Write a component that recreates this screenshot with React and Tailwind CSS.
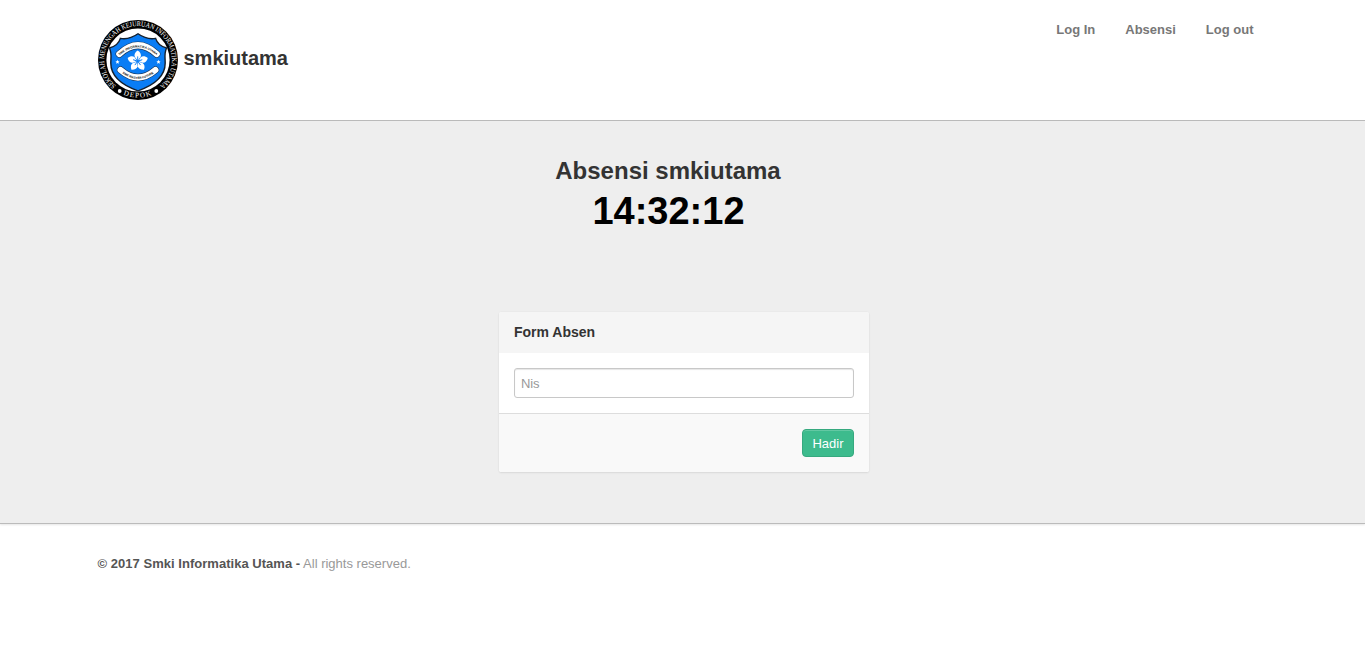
const petals = [0, 72, 144, 216, 288];

function Logo() {
  return (
    <svg viewBox="0 0 80 80" className="block size-20 shrink-0" aria-label="smkiutama">
      <defs>
        <path id="ringTop" d="M18 65.8 A33.9 33.9 0 1 1 62 65.8" />
        <path id="ringBottom" d="M22 73 A37.6 37.6 0 0 0 58 73" />
        <path id="bannerTop" d="M20.5 36.2 Q40 18.6 59.5 36.2" />
        <path id="bannerBottom" d="M22 51.3 Q40 66.8 58 51.3" />
      </defs>
      <circle cx="40" cy="40" r="40" fill="#000" />
      <circle cx="40" cy="40" r="31.6" fill="#fff" />
      <path
        d="M40 13.8 C34 18 28 19.4 22.4 18.4 C21 23 17 26.6 11.4 28 C14 33 12.8 37.5 12.8 43 C12.8 57 25 65.5 40 70.8 C55 65.5 67.2 57 67.2 43 C67.2 37.5 66 33 68.6 28 C63 26.6 59 23 57.6 18.4 C52 19.4 46 18 40 13.8 Z"
        fill="#0a7df5"
        stroke="#14202e"
        strokeWidth="1.4"
      />
      <g fill="none" strokeLinecap="round">
        <path d="M21.3 34 Q40 16.6 58.7 34" stroke="#173a63" strokeWidth="7.4" />
        <path d="M21.3 34 Q40 16.6 58.7 34" stroke="#fff" strokeWidth="6.2" />
        <path d="M22.6 50 Q40 65 57.4 50" stroke="#173a63" strokeWidth="7.4" />
        <path d="M22.6 50 Q40 65 57.4 50" stroke="#fff" strokeWidth="6.2" />
      </g>
      <g transform="translate(39.7 41.2)">
        {petals.map((a) => (
          <path
            key={a}
            transform={`rotate(${a})`}
            d="M0 -0.8 L-2.9 -4.2 C-3.9 -6.4 -2.6 -9 0 -10.6 C2.6 -9 3.9 -6.4 2.9 -4.2 Z"
            fill="#fff"
          />
        ))}
        {petals.map((a) => (
          <path key={a} transform={`rotate(${a})`} d="M0 0 V-4.8" stroke="#0a7df5" strokeWidth="0.9" />
        ))}
      </g>
      <g fill="#fff">
        <path d="M19.5 39.8 l.6 1.4 1.5.1 -1.1 1 .4 1.5 -1.4-.8 -1.4.8 .4-1.5 -1.1-1 1.5-.1z" />
        <path d="M60.5 39.8 l.6 1.4 1.5.1 -1.1 1 .4 1.5 -1.4-.8 -1.4.8 .4-1.5 -1.1-1 1.5-.1z" />
        <circle cx="21.7" cy="71" r="1.9" />
        <circle cx="58.3" cy="71" r="1.9" />
      </g>
      <g className="font-['Liberation_Serif',serif]" fill="#fff">
        <text fontSize="7.2">
          <textPath href="#ringTop" textLength="165" lengthAdjust="spacingAndGlyphs">
            SEKOLAH MENENGAH KEJURUAN INFORMATIKA UTAMA
          </textPath>
        </text>
        <text fontSize="7.2" letterSpacing="1.2" textAnchor="middle">
          <textPath href="#ringBottom" startOffset="50%">DEPOK</textPath>
        </text>
      </g>
      <g className="font-['Liberation_Sans',sans-serif] font-bold" fill="#111">
        <text fontSize="3.1" textAnchor="middle">
          <textPath href="#bannerTop" startOffset="50%">SMK INFORMATIKA UTAMA</textPath>
        </text>
        <text fontSize="3.1" textAnchor="middle">
          <textPath href="#bannerBottom" startOffset="50%">SMK MASTER FUTURE</textPath>
        </text>
      </g>
    </svg>
  );
}

export default function App() {
  return (
    <div className="min-h-[656px] bg-white font-['Liberation_Sans',Arial,sans-serif] text-[13px] leading-5 text-[#333]">
      <header className="h-[121px] border-b border-[#bbb]">
        <div className="mx-auto flex w-[1170px] items-start justify-between pt-5">
          <a className="flex items-center gap-[6px]">
            <Logo />
            <span className="pb-1 text-xl font-bold">smkiutama</span>
          </a>
          <nav className="flex gap-[30px] pr-[14px] font-bold text-[#777]">
            <a>Log In</a>
            <a>Absensi</a>
            <a>Log out</a>
          </nav>
        </div>
      </header>

      <main className="flex h-[403px] flex-col items-center border-b border-[#bbb] bg-[#eee] pt-[34px] shadow-[0_1px_2px_rgba(0,0,0,0.1)]">
        <div className="mr-[29px] text-center font-bold">
          <h1 className="text-2xl leading-8">Absensi smkiutama</h1>
          <div className="pl-px text-[38px] leading-[48px] text-black">14:32:12</div>
        </div>

        <form className="mt-[77px] ml-[3px] w-[370px] rounded-[2px] bg-white shadow-[0_0_1px_rgba(0,0,0,0.12),0_1px_2px_rgba(0,0,0,0.08)]">
          <div className="h-[41px] rounded-t-[2px] bg-[#f5f5f5] px-[15px] pt-[10px] text-sm font-bold">Form Absen</div>
          <div className="h-[60px] p-[15px]">
            <input
              placeholder="Nis"
              className="block h-[30px] w-full rounded-[3px] border border-[#c8c8c8] bg-white px-[6px] tracking-[-0.2px] shadow-[inset_0_1px_1px_rgba(0,0,0,0.1)] placeholder:text-[#999]"
            />
          </div>
          <div className="flex h-[59px] justify-end rounded-b-[2px] border-t border-[#ddd] bg-[#f9f9f9] px-[15px] pt-[15px]">
            <button
              type="button"
              className="h-7 w-[52px] rounded-[4px] border border-[#36a97f] bg-[#3dbb8d] pt-px text-white shadow-[inset_0_1px_0_rgba(255,255,255,0.2)]"
            >
              Hadir
            </button>
          </div>
        </form>
      </main>

      <footer className="mx-auto w-[1170px] pt-[30px] text-[#999]">
        <span className="font-bold tracking-[0.03px] text-[#555]">© 2017 Smki Informatika Utama -</span> All rights reserved.
      </footer>
    </div>
  );
}
